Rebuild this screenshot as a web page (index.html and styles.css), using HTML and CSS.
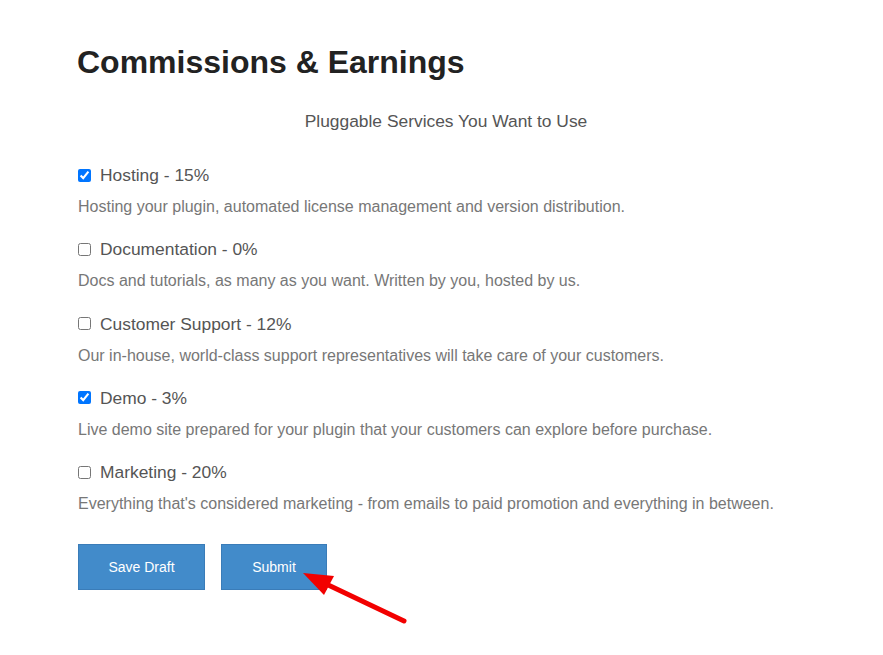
FILE: index.html
```html
<!DOCTYPE html>
<html lang="en">
<head>
    <meta charset="UTF-8">
    <meta name="viewport" content="width=device-width, initial-scale=1.0">
    <title>Commissions &amp; Earnings</title>

    <link rel="stylesheet" href="styles.css">
</head>
<body>
    <main class="page">
        <h1>Commissions &amp; Earnings</h1>
        <p class="subtitle">Pluggable Services You Want to Use</p>

        <form class="services">
            <div class="service">
                <label><input type="checkbox" checked> Hosting - 15%</label>
                <p>Hosting your plugin, automated license management and version distribution.</p>
            </div>
            <div class="service">
                <label><input type="checkbox"> Documentation - 0%</label>
                <p>Docs and tutorials, as many as you want. Written by you, hosted by us.</p>
            </div>
            <div class="service">
                <label><input type="checkbox"> Customer Support - 12%</label>
                <p>Our in-house, world-class support representatives will take care of your customers.</p>
            </div>
            <div class="service">
                <label><input type="checkbox" checked> Demo - 3%</label>
                <p>Live demo site prepared for your plugin that your customers can explore before purchase.</p>
            </div>
            <div class="service">
                <label><input type="checkbox"> Marketing - 20%</label>
                <p>Everything that's considered marketing - from emails to paid promotion and everything in between.</p>
            </div>

            <div class="actions">
                <button type="button" class="draft">Save Draft</button>
                <button type="submit" class="submit">Submit</button>

                <svg class="arrow" width="110" height="60" viewBox="0 0 110 60">
                    <line x1="104" y1="52" x2="24" y2="14" stroke="#f20000" stroke-width="5" stroke-linecap="round"/>
                    <polygon points="3,4 34,7 24,26" fill="#f20000"/>
                </svg>
            </div>
        </form>
    </main>
</body>
</html>
```

FILE: styles.css
```css
* {
    box-sizing: border-box;
}

body {
    margin: 0;
    min-height: 655px;
    background: #fff;
    font-family: "Liberation Sans", Arial, sans-serif;
}

.page {
    width: 738px;
    margin-left: 77px;
    padding-top: 43px;
    padding-bottom: 66px;
}

h1 {
    margin: 0;
    font-size: 32px;
    line-height: 38px;
    color: #222;
}

.subtitle {
    margin: 30px 0 0;
    text-align: center;
    font-size: 17.4px;
    line-height: 20px;
    color: #555;
}

.services {
    margin-top: 34px;
    padding-left: 1px;
}

.service {
    margin-bottom: 22.3px;

    & label {
        display: flex;
        align-items: center;
        gap: 9px;
        font-size: 17.4px;
        line-height: 20px;
        color: #555;
    }

    & input {
        margin: 0;
        width: 13px;
        height: 13px;
    }

    & p {
        margin: 12px 0 0;
        font-size: 16px;
        line-height: 20px;
        color: #777;
    }
}

.actions {
    position: relative;
    display: flex;
    gap: 16px;
    margin-top: 30px;
}

button {
    height: 46px;
    border: 1px solid #3a7cb8;
    border-radius: 0;
    background: #428bca;
    color: #fff;
    font-family: "Liberation Sans", Arial, sans-serif;
    font-size: 14px;
    cursor: pointer;
}

.draft {
    width: 127px;
}

.submit {
    width: 106px;
}

.arrow {
    position: absolute;
    left: 222px;
    top: 25px;
    pointer-events: none;
}
```
